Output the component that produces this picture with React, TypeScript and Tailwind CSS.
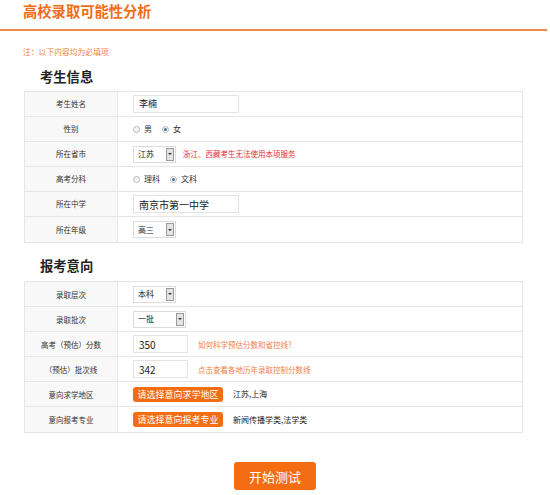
import React from 'react'

const font = { fontFamily: '"Noto Sans CJK SC", "Noto Sans", sans-serif' }

function Row({ label, children }: { label: string; children: React.ReactNode }) {
  return (
    <div className="flex h-[25px] border-b border-[#e6e6e6] last:border-b-0">
      <div className="w-[93px] shrink-0 flex items-center justify-center bg-[#f8f8f8] border-r border-[#e6e6e6] text-[7.5px] text-[#333]">
        {label}
      </div>
      <div className="flex-1 flex items-center pl-[15px] text-[7.5px] text-[#333]">{children}</div>
    </div>
  )
}

function TextBox({ value, w, big }: { value: string; w: string; big?: boolean }) {
  return (
    <div className={`${w} h-[18px] border border-[#e3e3e3] bg-white flex items-center pl-[5px] ${big ? 'text-[10px]' : 'text-[9px]'} text-[#222]`}>
      {value}
    </div>
  )
}

function Select({ value, w }: { value: string; w: string }) {
  return (
    <div className={`${w} h-[17px] border border-[#dcdcdc] bg-white flex items-center justify-between pl-[4px] pr-[1px] text-[8px] text-[#222]`}>
      <span>{value}</span>
      <span className="w-[8px] h-[13px] bg-[#e4e4e4] border border-[#9a9a9a] flex items-center justify-center">
        <span className="w-0 h-0 border-l-[2px] border-r-[2px] border-t-[2px] border-l-transparent border-r-transparent border-t-[#333]" />
      </span>
    </div>
  )
}

function Radio({ checked, label }: { checked?: boolean; label: string }) {
  return (
    <span className="flex items-center mr-[10px]">
      <span className="w-[7px] h-[7px] rounded-full border border-[#b8b8b8] bg-[#f4f4f4] flex items-center justify-center mr-[4px]">
        {checked && <span className="w-[3px] h-[3px] rounded-full bg-[#4a6fa0]" />}
      </span>
      <span className="text-[8px] text-[#333]">{label}</span>
    </span>
  )
}

function OrangeBtn({ text }: { text: string }) {
  return (
    <span className="w-[90px] h-[15px] rounded-[3px] bg-[#f56d12] text-white text-[9px] flex items-center justify-center mr-[10px]">
      {text}
    </span>
  )
}

export default function App() {
  return (
    <div className="w-[550px] h-[495px] bg-white" style={font}>
      <div className="h-[31px] w-[547px] flex items-center pl-[23px] border-b-2 border-[#f08a48]">
        <h1 className="text-[14.3px] font-bold text-[#f36c17] leading-none -mt-[7px]">高校录取可能性分析</h1>
      </div>
      <div className="pl-[23px] pt-[17px] text-[7.8px] text-[#f5822f] leading-none">注：以下内容均为必填项</div>

      <h2 className="pl-[40px] pt-[14px] text-[13.3px] font-bold text-[#222] leading-none">考生信息</h2>
      <div className="mt-[8px] ml-[24px] w-[499px] border border-[#e6e6e6]">
        <Row label="考生姓名">
          <TextBox value="李楠" w="w-[106px]" />
        </Row>
        <Row label="性别">
          <Radio label="男" />
          <Radio label="女" checked />
        </Row>
        <Row label="所在省市">
          <Select value="江苏" w="w-[43px]" />
          <span className="ml-[7px] text-[#ec2d2d]">浙江、西藏考生无法使用本项服务</span>
        </Row>
        <Row label="高考分科">
          <Radio label="理科" />
          <Radio label="文科" checked />
        </Row>
        <Row label="所在中学">
          <TextBox value="南京市第一中学" w="w-[106px]" big />
        </Row>
        <Row label="所在年级">
          <Select value="高三" w="w-[43px]" />
        </Row>
      </div>

      <h2 className="pl-[40px] pt-[16px] text-[13.3px] font-bold text-[#222] leading-none">报考意向</h2>
      <div className="mt-[9px] ml-[24px] w-[499px] border border-[#e6e6e6]">
        <Row label="录取层次">
          <Select value="本科" w="w-[43px]" />
        </Row>
        <Row label="录取批次">
          <Select value="一批" w="w-[53px]" />
        </Row>
        <Row label="高考（预估）分数">
          <TextBox value="350" w="w-[55px]" big />
          <span className="ml-[10px] text-[#f2804a]">如何科学预估分数和省控线？</span>
        </Row>
        <Row label="（预估）批次线">
          <TextBox value="342" w="w-[55px]" big />
          <span className="ml-[10px] text-[#f2804a]">点击查看各地历年录取控制分数线</span>
        </Row>
        <Row label="意向求学地区">
          <OrangeBtn text="请选择意向求学地区" />
          <span className="text-[8px] text-[#222]">江苏,上海</span>
        </Row>
        <Row label="意向报考专业">
          <OrangeBtn text="请选择意向报考专业" />
          <span className="text-[8px] text-[#222]">新闻传播学类,法学类</span>
        </Row>
      </div>

      <div className="flex justify-center pt-[29px]">
        <button className="w-[82px] h-[28px] rounded-[3px] bg-[#f56d12] text-white text-[13px]">开始测试</button>
      </div>
    </div>
  )
}
